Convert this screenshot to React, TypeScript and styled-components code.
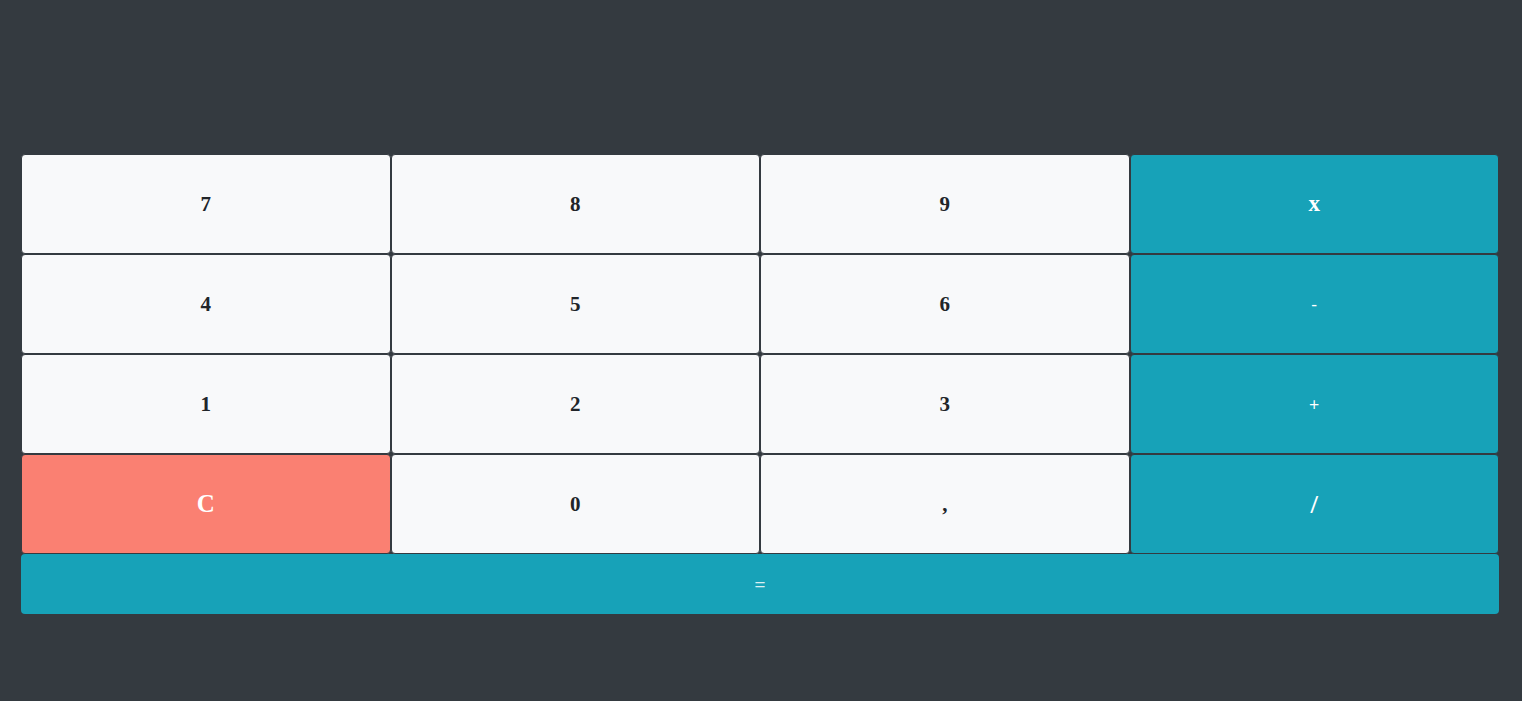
import styled, { createGlobalStyle } from 'styled-components'

const GlobalStyle = createGlobalStyle`
  html, body {
    margin: 0;
    padding: 0;
    background: #343a40;
    min-height: 100%;
  }
  #root {
    min-height: 701px;
    background: #343a40;
  }
`

type Variant = 'light' | 'info' | 'danger'

const COLORS: Record<Variant, { bg: string; fg: string }> = {
  light: { bg: '#f8f9fa', fg: '#212529' },
  info: { bg: '#17a2b8', fg: '#ffffff' },
  danger: { bg: '#fa8072', fg: '#ffffff' },
}

const Page = styled.div`
  box-sizing: border-box;
  padding: 154px 23px 0 21px;
`

const Pad = styled.div`
  display: grid;
  grid-template-columns: repeat(4, 1fr);
  grid-auto-rows: 100px;
`

const Key = styled.button<{ $variant: Variant; $serif?: boolean; $size?: number }>`
  box-sizing: border-box;
  display: flex;
  align-items: center;
  justify-content: center;
  border: 1px solid #343a40;
  border-radius: 4px;
  margin: 0;
  padding: 0;
  background: ${(p) => COLORS[p.$variant].bg};
  color: ${(p) => COLORS[p.$variant].fg};
  font-family: ${(p) =>
    p.$serif
      ? '"Liberation Serif", "DejaVu Serif", serif'
      : '"Open Sans", "Liberation Sans", sans-serif'};
  font-weight: ${(p) => (p.$serif ? 900 : 400)};
  font-size: ${(p) => p.$size ?? 21}px;
  cursor: pointer;
`

const Equals = styled(Key)`
  grid-column: 1 / -1;
  height: 60px;
  border: none;
  align-self: start;
  color: rgba(255, 255, 255, 0.85);
`

const keys: { label: string; variant: Variant; serif: boolean; size?: number }[] = [
  { label: '7', variant: 'light', serif: true },
  { label: '8', variant: 'light', serif: true },
  { label: '9', variant: 'light', serif: true },
  { label: 'x', variant: 'info', serif: true, size: 23 },
  { label: '4', variant: 'light', serif: true },
  { label: '5', variant: 'light', serif: true },
  { label: '6', variant: 'light', serif: true },
  { label: '-', variant: 'info', serif: false, size: 18 },
  { label: '1', variant: 'light', serif: true },
  { label: '2', variant: 'light', serif: true },
  { label: '3', variant: 'light', serif: true },
  { label: '+', variant: 'info', serif: false, size: 18 },
  { label: 'C', variant: 'danger', serif: true, size: 25 },
  { label: '0', variant: 'light', serif: true },
  { label: ',', variant: 'light', serif: true },
  { label: '/', variant: 'info', serif: false, size: 23 },
]

const App = () => {
  return (
    <>
      <GlobalStyle />
      <Page>
        <Pad>
          {keys.map((k) => (
            <Key key={k.label} $variant={k.variant} $serif={k.serif} $size={k.size}>
              {k.label}
            </Key>
          ))}
          <Equals $variant="info" $size={20}>
            =
          </Equals>
        </Pad>
      </Page>
    </>
  )
}

export default App
